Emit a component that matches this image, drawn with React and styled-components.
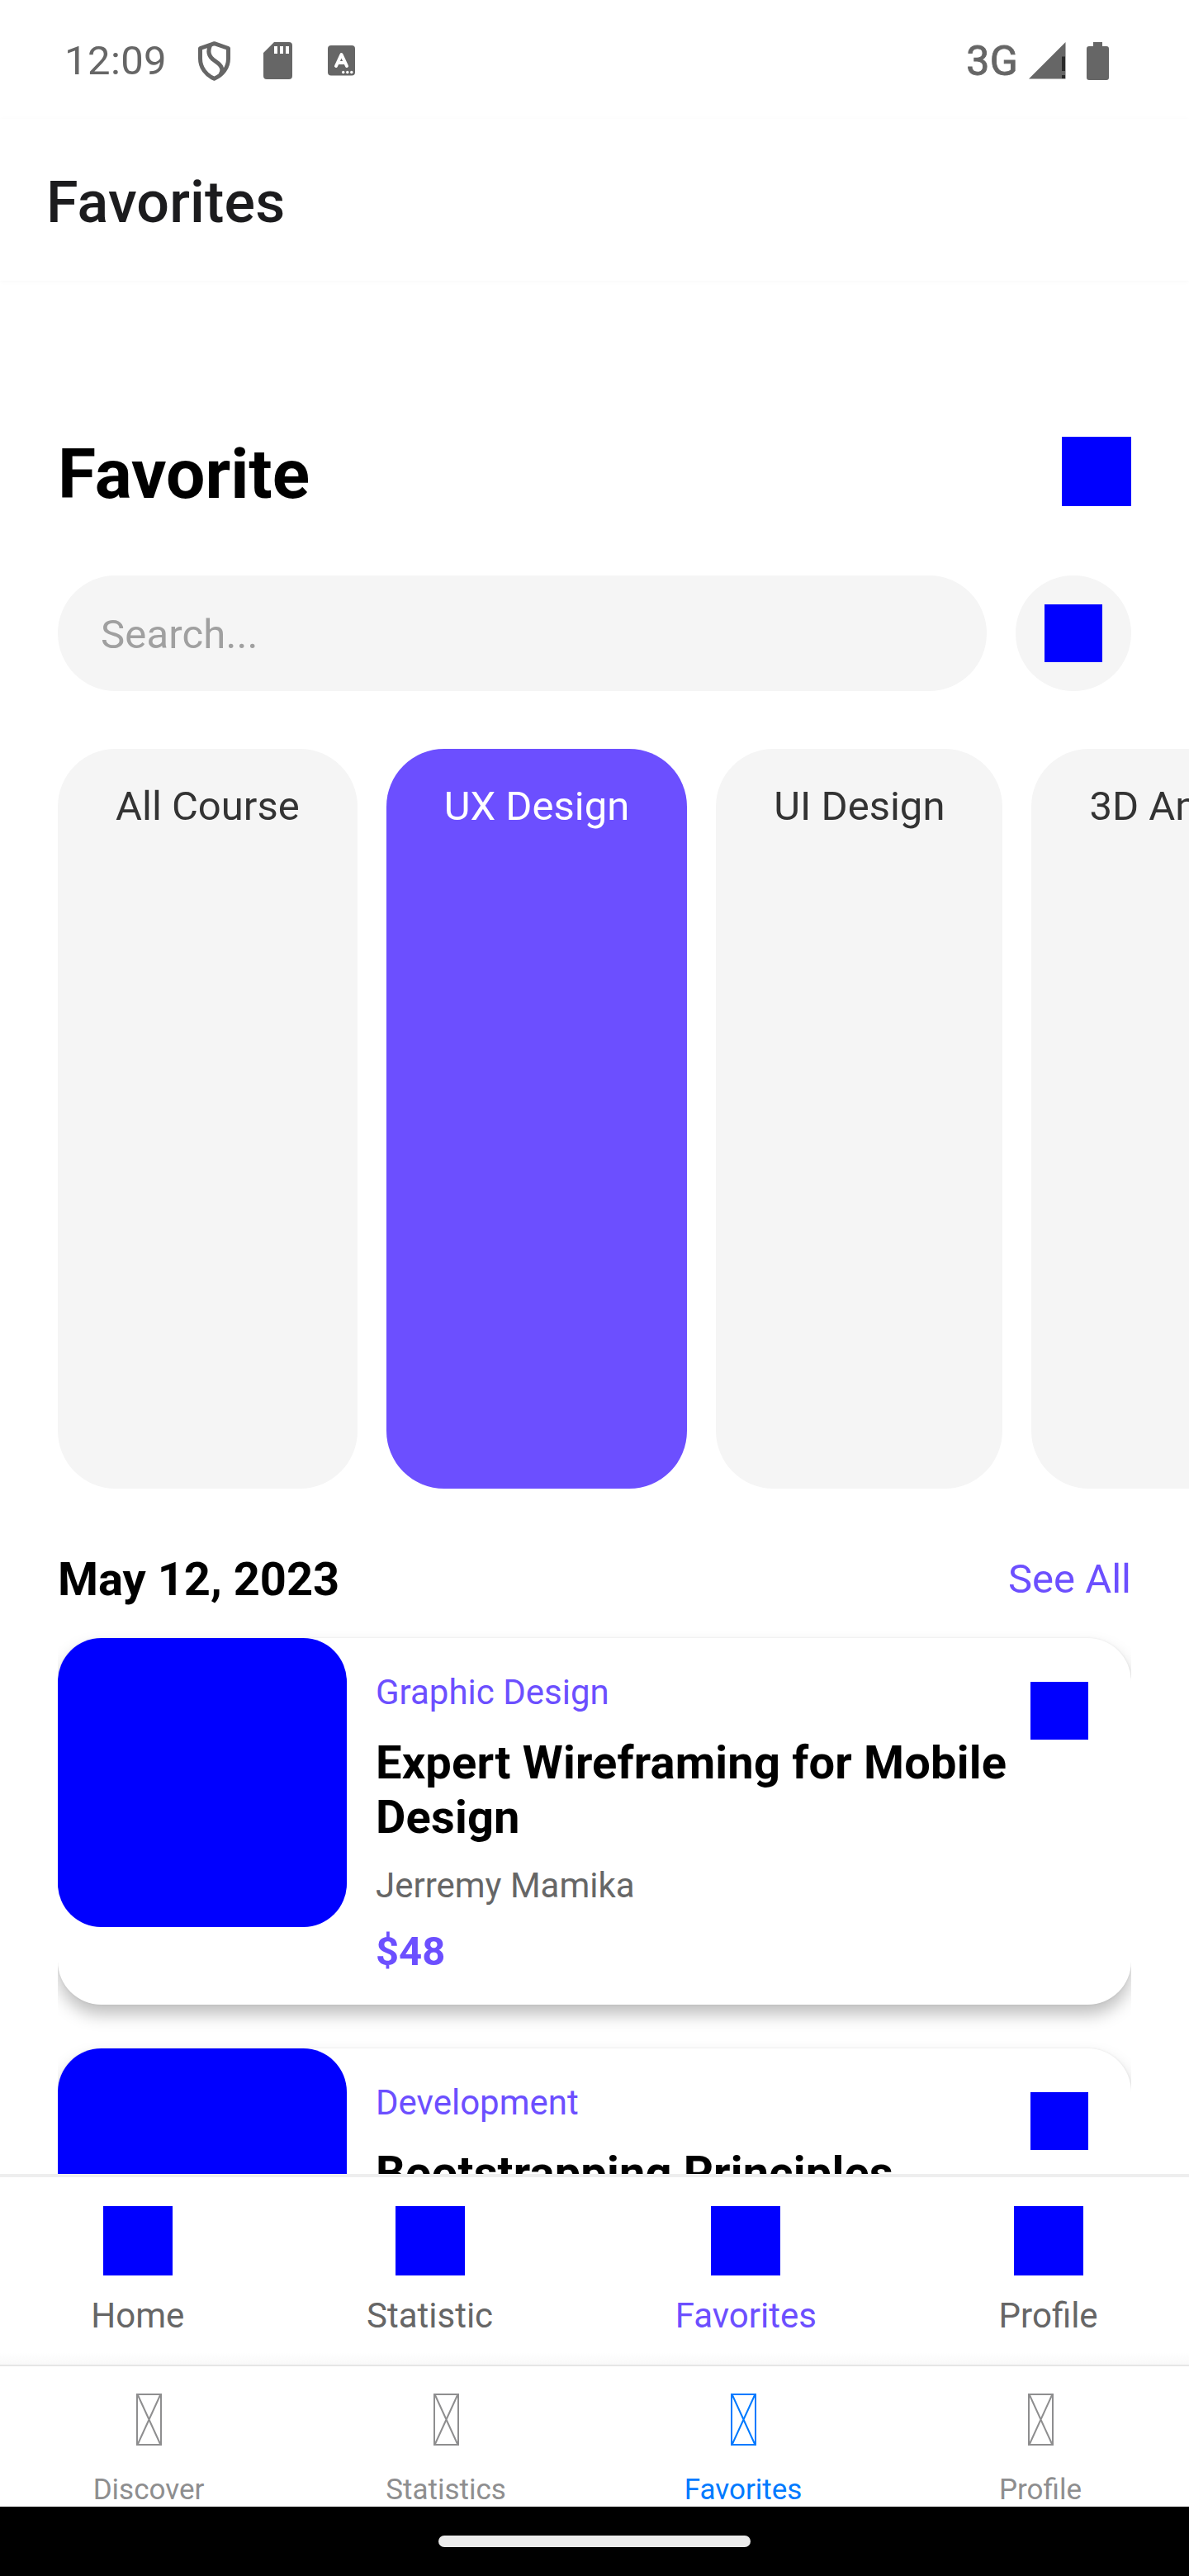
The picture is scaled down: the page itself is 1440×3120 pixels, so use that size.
import React from "react";
import styled, { createGlobalStyle } from "styled-components";

const Global = createGlobalStyle`
  * { box-sizing: border-box; }
  html, body { margin: 0; padding: 0; background: #fff; }
  body { font-family: Roboto, "Liberation Sans", sans-serif; }
`;

const ACCENT = "#6c4fff";

const Screen = styled.div`
  width: 1440px;
  height: 3120px;
  display: flex;
  flex-direction: column;
  overflow: hidden;
  background: #fff;
`;

const StatusBar = styled.div`
  height: 144px;
  flex: none;
  display: flex;
  align-items: center;
  justify-content: space-between;
  padding: 3px 97px 0 78px;
  color: #666;
`;

const StatusGroup = styled.div`
  display: flex;
  align-items: center;
`;

const Clock = styled.span`
  width: 162px;
  font-size: 49px;
  line-height: 58px;
  letter-spacing: 0.4px;
`;

const Network = styled.span`
  font-size: 50px;
  line-height: 58px;
  font-weight: 400;
  -webkit-text-stroke: 0.9px #666;
  letter-spacing: 0.3px;
  margin-right: 13px;
`;

const StatusIcon = styled.svg`
  display: block;
  flex: none;
  margin-right: ${(p) => p.$gap || 0}px;
`;

const AppHeader = styled.header`
  height: 196px;
  flex: none;
  padding: 60px 56px 0;
  box-shadow: 0 1px 6px rgba(0, 0, 0, 0.03);
`;

const HeaderTitle = styled.h1`
  margin: 0;
  font-size: 70px;
  line-height: 82px;
  font-weight: 500;
  letter-spacing: 0.15px;
  color: #1c1c1e;
`;

const Body = styled.main`
  height: 2293px;
  flex: none;
  overflow: hidden;
  padding: 180px 0 0 70px;
`;

const TitleRow = styled.div`
  display: flex;
  justify-content: space-between;
  align-items: flex-start;
  height: 177px;
  padding-right: 70px;
`;

const PageTitle = styled.h2`
  margin: 6px 0 0;
  font-size: 84px;
  line-height: 98px;
  font-weight: 700;
  color: #000;
`;

const Block = styled.div`
  width: ${(p) => p.$size}px;
  height: ${(p) => p.$size}px;
  flex: none;
  background: #00f;
`;

const TitleIcon = styled(Block)`
  margin-top: 9px;
`;

const SearchRow = styled.div`
  display: flex;
  gap: 35px;
  padding-right: 70px;
  margin-bottom: 70px;
`;

const SearchField = styled.div`
  flex: 1;
  height: 140px;
  border-radius: 70px;
  background: #f5f5f5;
  padding: 43px 52px;
  font-size: 49px;
  line-height: 57px;
  letter-spacing: 0.15px;
  color: #a0a0a0;
`;

const FilterButton = styled.div`
  width: 140px;
  height: 140px;
  border-radius: 50%;
  background: #f5f5f5;
  display: flex;
  align-items: center;
  justify-content: center;
`;

const Chips = styled.div`
  display: flex;
  gap: 35px;
  height: 896px;
  overflow: hidden;
`;

const Chip = styled.div`
  flex: none;
  height: 896px;
  border-radius: 70px;
  padding: 41px 70px;
  font-size: 49px;
  line-height: 57px;
  white-space: nowrap;
  background: ${(p) => (p.$active ? ACCENT : "#f5f5f5")};
  color: ${(p) => (p.$active ? "#fff" : "#333")};
`;

const SectionRow = styled.div`
  display: flex;
  justify-content: space-between;
  height: 171px;
  padding: 77px 70px 0 0;
`;

const SectionDate = styled.h3`
  margin: 0;
  font-size: 56px;
  line-height: 66px;
  font-weight: 700;
  color: #000;
`;

const SeeAll = styled.span`
  font-size: 49px;
  line-height: 66px;
  color: ${ACCENT};
`;

const CardList = styled.div`
  width: 1300px;
  display: flex;
  flex-direction: column;
  gap: 53px;
  padding: 10px 0 60px;
  overflow: hidden;
`;

const Card = styled.article`
  display: flex;
  height: 444px;
  flex: none;
  border-radius: 52.5px;
  background: #fff;
  box-shadow: 0 12px 20px rgba(0, 0, 0, 0.25), 0 0 3px rgba(0, 0, 0, 0.08);
`;

const Thumb = styled.div`
  width: 350px;
  height: 350px;
  flex: none;
  border-radius: 52.5px;
  background: #00f;
`;

const CardText = styled.div`
  width: 793px;
  flex: none;
  padding: 41px 0 0 35px;
`;

const Category = styled.div`
  font-size: 42px;
  line-height: 49px;
  color: ${ACCENT};
`;

const CourseName = styled.h4`
  margin: 28px -20px 0 0;
  font-size: 56px;
  line-height: 66px;
  font-weight: 700;
  letter-spacing: 0.18px;
  color: #000;
`;

const Author = styled.div`
  margin-top: 25px;
  font-size: 42px;
  line-height: 49px;
  color: #666;
`;

const Price = styled.div`
  margin-top: 27px;
  font-size: 49px;
  line-height: 57px;
  font-weight: 700;
  color: ${ACCENT};
`;

const CardMark = styled(Block)`
  margin: 53px 52px 0 auto;
`;

const InnerNav = styled.nav`
  height: 231px;
  flex: none;
  display: flex;
  justify-content: space-around;
  border-top: 4px solid #eee;
  padding-top: 35px;
  background: linear-gradient(#fff, #fff 212px, #f9f9f9 227px);
`;

const NavItem = styled.div`
  display: flex;
  flex-direction: column;
  align-items: center;
  gap: 24px;
  font-size: 42px;
  line-height: 49px;
  color: ${(p) => (p.$active ? ACCENT : "#666")};
`;

const TabBar = styled.nav`
  height: 172px;
  flex: none;
  display: flex;
  border-top: 2px solid #e6e6e6;
  background: #fff;
`;

const Tab = styled.div`
  flex: 1;
  display: flex;
  flex-direction: column;
  align-items: center;
  padding-top: 33px;
  gap: 33px;
  font-size: 35px;
  line-height: 41px;
  color: ${(p) => (p.$active ? "#007aff" : "#8e8e8f")};
`;

const GestureBar = styled.div`
  height: 84px;
  flex: none;
  background: #000;
  display: flex;
  align-items: center;
  justify-content: center;
`;

const Handle = styled.div`
  width: 378px;
  height: 14px;
  border-radius: 7px;
  background: #ebebeb;
`;

const GlyphBox = () => (
  <svg width="31" height="63" viewBox="0 0 31 63" fill="none" stroke="currentColor">
    <rect x="1" y="1" width="29" height="61" strokeWidth="2" />
    <path d="M2 2L29 61M29 2L2 61" strokeWidth="2" />
  </svg>
);

const chips = ["All Course", "UX Design", "UI Design", "3D Animation"];

const courses = [
  { category: "Graphic Design", name: "Expert Wireframing for Mobile Design", author: "Jerremy Mamika", price: "$48" },
  { category: "Development", name: "Bootstrapping Principles" },
];

const navItems = ["Home", "Statistic", "Favorites", "Profile"];
const tabs = ["Discover", "Statistics", "Favorites", "Profile"];

export default function App() {
  return (
    <>
      <Global />
      <Screen>
        <StatusBar>
          <StatusGroup>
            <Clock>12:09</Clock>
            <StatusIcon $gap={40} width="39" height="48" viewBox="0 0 39 48" fill="none" stroke="#666" strokeWidth="5" strokeLinejoin="round">
              <path d="M19.5 2.7L36.5 8.5V21C36.5 32 29.5 41 19.5 45.3C9.5 41 2.5 32 2.5 21V8.5Z" />
              <path d="M14.5 5C11.5 12 13 18 18 22L24 26.5C29.5 31 30 36 27 40" />
            </StatusIcon>
            <StatusIcon $gap={43} width="35" height="45" viewBox="0 0 35 45">
              <path fill="#666" fillRule="evenodd" d="M13 0H31Q35 0 35 4V41Q35 45 31 45H4Q0 45 0 41V13ZM13 5V14H17V5ZM20 5V14H24V5ZM27 5V14H31V5Z" />
            </StatusIcon>
            <StatusIcon width="33" height="37" viewBox="0 0 33 37">
              <rect width="33" height="36.5" rx="4" fill="#666" />
              <path d="M10 25L16.5 11L23 25M12 21H21" fill="none" stroke="#fff" strokeWidth="4" strokeLinecap="round" strokeLinejoin="round" />
              <g fill="#fff">
                <circle cx="18.7" cy="32.5" r="1.7" />
                <circle cx="23.8" cy="32.5" r="1.7" />
                <circle cx="28.8" cy="32.5" r="1.7" />
              </g>
            </StatusIcon>
          </StatusGroup>
          <StatusGroup>
            <Network>3G</Network>
            <StatusIcon $gap={25} width="45" height="45" viewBox="0 0 45 45">
              <path d="M44.5 0V44.5H0Z" fill="#666" />
              <path d="M40 17.5H44V35H40ZM40 40H44V44H40Z" fill="#2a2a2a" />
            </StatusIcon>
            <StatusIcon width="27" height="46" viewBox="0 0 27 46">
              <path d="M8 0H19V5H24Q27 5 27 8V43Q27 46 24 46H3Q0 46 0 43V8Q0 5 3 5H8Z" fill="#666" />
            </StatusIcon>
          </StatusGroup>
        </StatusBar>
        <AppHeader>
          <HeaderTitle>Favorites</HeaderTitle>
        </AppHeader>
        <Body>
          <TitleRow>
            <PageTitle>Favorite</PageTitle>
            <TitleIcon $size={84} />
          </TitleRow>
          <SearchRow>
            <SearchField>Search...</SearchField>
            <FilterButton>
              <Block $size={70} />
            </FilterButton>
          </SearchRow>
          <Chips>
            {chips.map((c) => (
              <Chip key={c} $active={c === "UX Design"}>{c}</Chip>
            ))}
          </Chips>
          <SectionRow>
            <SectionDate>May 12, 2023</SectionDate>
            <SeeAll>See All</SeeAll>
          </SectionRow>
          <CardList>
            {courses.map((c) => (
              <Card key={c.name}>
                <Thumb />
                <CardText>
                  <Category>{c.category}</Category>
                  <CourseName>{c.name}</CourseName>
                  {c.author && <Author>{c.author}</Author>}
                  {c.price && <Price>{c.price}</Price>}
                </CardText>
                <CardMark $size={70} />
              </Card>
            ))}
          </CardList>
        </Body>
        <InnerNav>
          {navItems.map((n) => (
            <NavItem key={n} $active={n === "Favorites"}>
              <Block $size={84} />
              {n}
            </NavItem>
          ))}
        </InnerNav>
        <TabBar>
          {tabs.map((t) => (
            <Tab key={t} $active={t === "Favorites"}>
              <GlyphBox />
              {t}
            </Tab>
          ))}
        </TabBar>
        <GestureBar>
          <Handle />
        </GestureBar>
      </Screen>
    </>
  );
}
